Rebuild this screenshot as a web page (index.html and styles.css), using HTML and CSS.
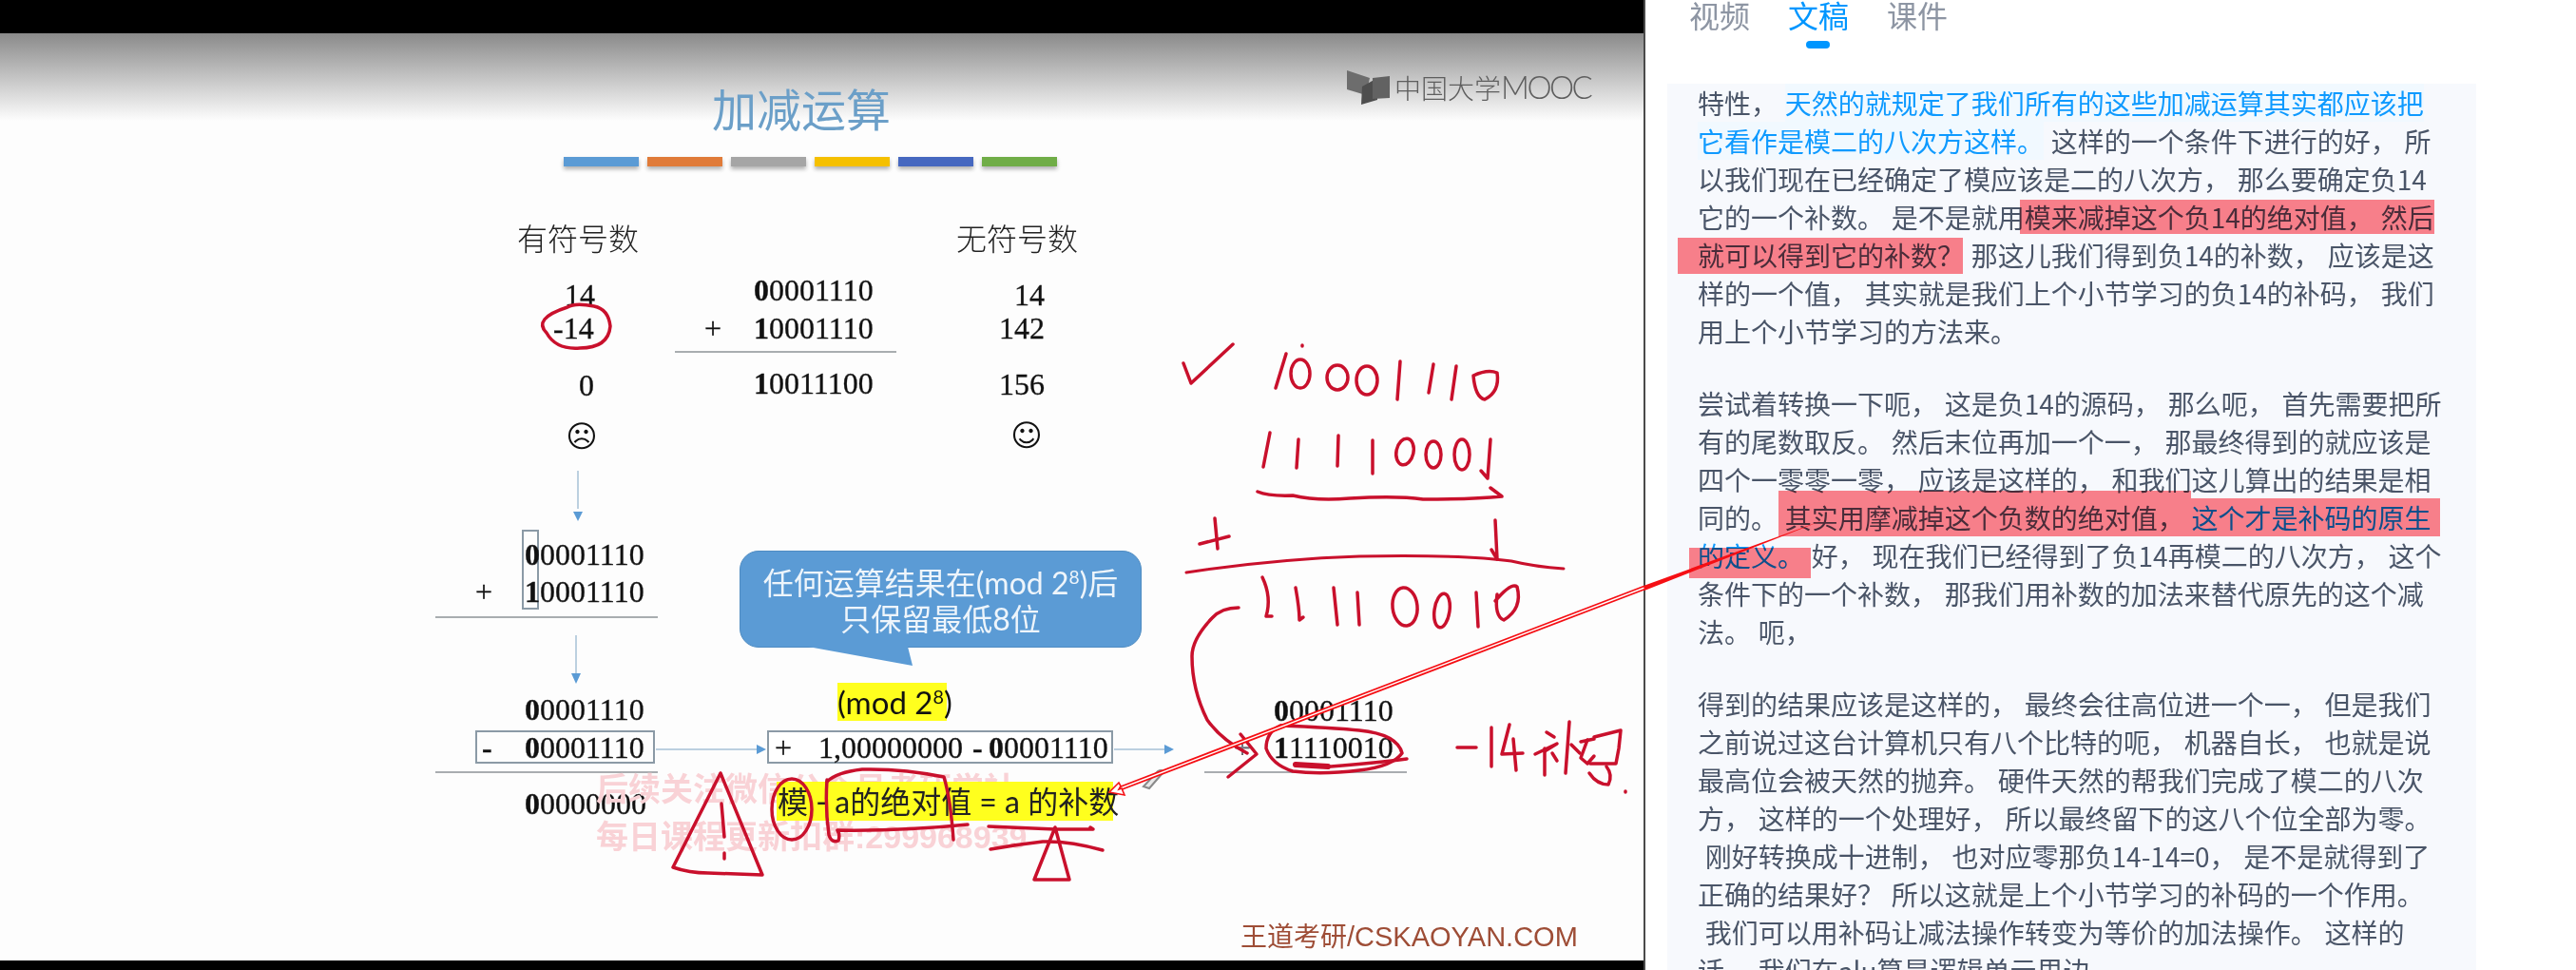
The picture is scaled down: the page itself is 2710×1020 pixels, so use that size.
FILE: index.html
```html
<!DOCTYPE html>
<html lang="zh">
<head>
<meta charset="utf-8">
<title>加减运算</title>
<link rel="stylesheet" href="styles.css">
</head>
<body>
<div class="page">
  <section class="video">
    <div class="slide">
      <h1 class="t title">加减运算</h1>
      <div class="bars"><i class="b1"></i><i class="b2"></i><i class="b3"></i><i class="b4"></i><i class="b5"></i><i class="b6"></i></div>
      <div class="t logo"><span class="logo-cn">中国大学</span>MOOC</div>

      <div class="t cn h-signed">有符号数</div>
      <div class="t cn h-unsigned">无符号数</div>

      <div class="t n a1">14</div>
      <div class="t n a2">-14</div>
      <div class="t n a3">0</div>
      <div class="t face f1">☹</div>
      <div class="t n u1">14</div>
      <div class="t n u2">142</div>
      <div class="t n u3">156</div>
      <div class="t face f2">☺</div>

      <div class="t n b-a1"><b>0</b>0001110</div>
      <div class="t n plus1">+</div>
      <div class="t n b-a2"><b>1</b>0001110</div>
      <div class="rule r-a"></div>
      <div class="t n b-a3"><b>1</b>0011100</div>

      <div class="box col"></div>
      <div class="t n c1"><b>0</b>0001110</div>
      <div class="t n plus2">+</div>
      <div class="t n c2"><b>1</b>0001110</div>
      <div class="rule r-b"></div>

      <div class="t n d1"><b>0</b>0001110</div>
      <div class="box d-box"></div>
      <div class="t n d-minus"><b>-</b></div>
      <div class="t n d2"><b>0</b>0001110</div>
      <div class="rule r-c"></div>
      <div class="t n d3"><b>0</b>0000000</div>

      <div class="t wm w1">后续关注微信公众号考研学社</div>
      <div class="t wm w2">每日课程更新扣群:299968939</div>

      <div class="callout">任何运算结果在(mod 2<sup>8</sup>)后<br>只保留最低8位</div>
      <div class="t mod">(mod 2<sup>8</sup>)</div>

      <div class="box e-box"></div>
      <div class="t n e-plus">+</div>
      <div class="t n e-one">1,00000000</div>
      <div class="t n e-minus"><b>-</b></div>
      <div class="t n e-num"><b>0</b>0001110</div>

      <div class="t formula">模 - a的绝对值 = a 的补数</div>

      <div class="t n g1"><b>0</b>0001110</div>
      <div class="t n plus3">+</div>
      <div class="t n g2"><b>1</b>1110010</div>
      <div class="rule r-d"></div>

      <div class="t brand"><span class="brand-cn">王道考研</span>/CSKAOYAN.COM</div>
    </div>
  </section>

  <aside class="side">
    <nav class="tabs">
      <span class="tab">视频</span>
      <span class="tab active">文稿</span>
      <span class="tab">课件</span>
    </nav>
    <div class="transcript">
      <p>特性， <span class="hl">天然的就规定了我们所有的这些加减运算其实都应该把<br>它看作是模二的八次方这样。</span> 这样的一个条件下进行的好， 所<br>以我们现在已经确定了模应该是二的八次方， 那么要确定负14<br>它的一个补数。 是不是就用模来减掉这个负14的绝对值， 然后<br>就可以得到它的补数？ 那这儿我们得到负14的补数， 应该是这<br>样的一个值， 其实就是我们上个小节学习的负14的补码， 我们<br>用上个小节学习的方法来。</p>
      <p>尝试着转换一下呃， 这是负14的源码， 那么呃， 首先需要把所<br>有的尾数取反。 然后末位再加一个一， 那最终得到的就应该是<br>四个一零零一零， 应该是这样的， 和我们这儿算出的结果是相<br>同的。 其实用摩减掉这个负数的绝对值， <span class="hl-plain">这个才是补码的原生<br>的定义。</span> 好， 现在我们已经得到了负14再模二的八次方， 这个<br>条件下的一个补数， 那我们用补数的加法来替代原先的这个减<br>法。 呃，</p>
      <p>得到的结果应该是这样的， 最终会往高位进一个一， 但是我们<br>之前说过这台计算机只有八个比特的呃， 机器自长， 也就是说<br>最高位会被天然的抛弃。 硬件天然的帮我们完成了模二的八次<br>方， 这样的一个处理好， 所以最终留下的这八个位全部为零。<br> 刚好转换成十进制， 也对应零那负14-14=0， 是不是就得到了<br>正确的结果好？ 所以这就是上个小节学习的补码的一个作用。<br> 我们可以用补码让减法操作转变为等价的加法操作。 这样的<br>话， 我们在alu算是逻辑单元里边，</p>
      <span class="mark m1"></span><span class="mark m2"></span><span class="mark m3"></span><span class="mark m4"></span><span class="mark m5"></span>
    </div>
  </aside>

  <svg class="ink" viewBox="0 0 2710 1020" aria-hidden="true">
    <!-- slide furniture -->
    <g class="logo-mark">
      <polygon class="lm1" points="1417,74 1441,82 1437,100 1417,94"/>
      <polygon class="lm2" points="1433,91 1449,82 1449,105 1432,110"/>
      <polygon class="lm3" points="1444,82 1462,80 1462,103 1444,104"/>
    </g>
    <g class="flow">
      <line x1="608" y1="495" x2="608" y2="535"/><polygon points="603,538 613,538 608,548"/>
      <line x1="606" y1="668" x2="606" y2="708"/><polygon points="601,708 611,708 606,719"/>
      <line x1="690" y1="788" x2="796" y2="788"/><polygon points="796,783 796,793 806,788"/>
      <line x1="1172" y1="788" x2="1225" y2="788"/><polygon points="1225,783 1225,793 1235,788"/>
    </g>
    <polygon class="tail" points="850,680 960,700 955,680"/>
    <g class="pencil"><path d="M1203,827 L1218,811 Q1223,808 1223,813 L1209,829 Z"/></g>

    <!-- pen strokes -->
    <g class="pen">
      <path d="M597,323 Q560,335 575,350 Q585,368 610,366 Q640,366 642,343 Q640,325 625,322 Q605,318 597,323"/>
      <path d="M1245,382 L1253,403 L1297,362"/>
      <path d="M1353,372 L1342,408"/><path class="dot" d="M1370,363 l0,1"/>
      <ellipse cx="1368" cy="393" rx="10" ry="15"/><ellipse cx="1407" cy="397" rx="11" ry="13"/><ellipse cx="1438" cy="400" rx="11" ry="15"/>
      <path d="M1473,380 L1470,420"/><path d="M1508,383 L1503,413"/><path d="M1532,385 L1527,420"/>
      <path d="M1550,395 Q1565,388 1575,392 Q1578,412 1562,420 Q1552,418 1550,395"/>

      <path d="M1336,455 L1329,491"/><path d="M1366,462 L1364,492"/><path d="M1408,458 L1407,490"/><path d="M1444,463 L1444,498"/>
      <ellipse cx="1478" cy="475" rx="9" ry="14" transform="rotate(12 1478 475)"/><ellipse cx="1508" cy="478" rx="8" ry="14"/><ellipse cx="1538" cy="478" rx="8" ry="16"/>
      <path d="M1568,462 L1565,503 L1558,495"/>

      <path d="M1323,517 Q1335,522 1360,521 Q1385,527 1420,524 Q1470,521 1497,525 Q1550,525 1580,522 L1568,513"/>

      <path d="M1262,572 L1293,564"/><path d="M1278,545 L1281,577"/>
      <path d="M1573,547 L1575,588 L1569,578"/>
      <path class="thin" d="M1248,602 Q1340,588 1430,585 Q1540,583 1590,590 Q1615,596 1645,598"/>

      <path d="M1328,607 Q1338,628 1332,648 L1338,648"/><path d="M1363,618 Q1367,640 1367,652 L1371,649"/>
      <path d="M1403,618 L1407,657"/><path d="M1428,623 L1430,657"/>
      <ellipse cx="1478" cy="638" rx="13" ry="20" transform="rotate(-6 1478 638)"/><ellipse cx="1517" cy="642" rx="8" ry="18" transform="rotate(8 1517 642)"/>
      <path d="M1553,623 L1555,659"/>
      <path d="M1573,632 Q1590,612 1596,617 Q1602,640 1582,652 Q1572,648 1575,625"/>

      <path d="M1303,639 Q1285,639 1275,650 Q1254,672 1254,690 Q1254,725 1270,757 Q1285,778 1312,792"/>
      <path d="M1305,772 L1322,793 L1292,817"/>
      <path d="M1347,763 Q1400,765 1430,768 Q1470,772 1475,792 Q1465,806 1430,810 Q1390,815 1360,811 Q1338,804 1332,787 Q1332,770 1347,763"/>
      <path class="thick" d="M1363,804 L1397,806"/>
      <path d="M1400,806 Q1450,802 1480,798"/>

      <path d="M1533,786 L1553,786"/><path d="M1569,765 L1569,806"/>
      <path d="M1588,762 L1580,793 L1602,792"/><path d="M1592,777 L1595,810"/>
      <path d="M1627,770 L1635,775"/><path d="M1615,793 L1638,782 L1625,790"/><path d="M1625,787 L1625,815"/><path d="M1633,792 L1638,800"/>
      <path d="M1651,759 L1647,813"/><path d="M1653,783 L1662,792"/>
      <path d="M1663,780 L1677,777"/><path d="M1670,778 L1663,797 L1670,803 L1677,795"/>
      <path d="M1677,775 L1705,768 L1703,787 L1700,803 L1673,803"/><path d="M1672,813 Q1680,825 1692,825 Q1697,815 1690,806"/>
      <path class="dot" d="M1710,832 l0,1"/>

      <path d="M758,813 L708,912 Q725,918 745,918 L802,920 L758,813"/>
      <path d="M759,845 L762,880"/><path d="M762,897 L762,903"/>
      <ellipse cx="833" cy="851" rx="21" ry="32"/>
      <path d="M870,822 Q880,812 907,809 Q950,808 993,817 Q1000,840 1003,883"/>
      <path d="M870,820 Q868,850 872,878 Q875,887 882,884 Q884,878 881,873 Q950,874 1018,867"/>
      <path d="M1040,869 Q1090,871 1110,872 L1150,872 L1147,870"/>
      <path d="M1042,893 Q1070,888 1097,885 Q1125,884 1160,894"/>
      <path d="M1110,870 L1088,925 L1125,925 L1110,870"/>
    </g>

    <!-- callout connector -->
    <path class="link-out" d="M1176,830 L1730,618"/>
    <path class="link-in" d="M1176,830 L1730,618"/>
    <polygon class="link-head" points="1167,833 1177,823 1179,826.5 1177,830 1180,829 1183,836"/>
    <polygon class="link-solid" points="1729,616 1918,547 1730,621"/>
  </svg>
</div>
</body>
</html>
```
FILE: styles.css
```css
* { box-sizing: border-box; }
html, body { margin: 0; padding: 0; background: #fff; }
.page { position: relative; display: flex; width: 2710px; height: 1020px; overflow: hidden; font-family: "Noto Sans CJK SC", "Liberation Sans", sans-serif; }

/* ---------- video ---------- */
.video { flex: 0 0 1731px; height: 1020px; padding: 35px 0 10px; background: #000; border-right: 2px solid #4a4a4a; }
.slide { position: relative; width: 100%; height: 975px; overflow: hidden; background: linear-gradient(#8a8a8a 0, #fdfdfd 92px) #fdfdfd; filter: blur(.5px); }

.t { position: absolute; margin: 0; line-height: 40px; white-space: nowrap; color: #111; }
.n { font-family: "Liberation Serif", serif; font-size: 32px; -webkit-text-stroke: .3px #111; }
.cn { font-size: 32px; font-weight: 300; color: #222; }
.face { font-family: "DejaVu Sans", sans-serif; font-size: 32px; width: 40px; text-align: center; }
sup { font-size: .6em; line-height: 0; vertical-align: .55em; }

.title { left: 749px; top: 58px; font-size: 47px; line-height: 40px; font-weight: 400; color: #6b9fc8; }
.bars { position: absolute; left: 593px; top: 130px; display: flex; gap: 9px; }
.bars i { display: block; width: 79px; height: 10px; box-shadow: 0 3px 4px rgba(0,0,0,.3); }
.b1 { background: #5b9bd5; } .b2 { background: #e07b39; } .b3 { background: #a5a5a5; }
.b4 { background: #f5c000; } .b5 { background: #4668c0; } .b6 { background: #70ad47; }
.logo { left: 1467px; top: 36px; font-family: "Lato", sans-serif; font-size: 33px; font-weight: 300; color: #5e5e5e; letter-spacing: -2.6px; }
.logo-cn { font-family: "Noto Sans CJK SC", sans-serif; font-size: 28px; letter-spacing: 0; }

.h-signed { left: 544px; top: 194px; }
.h-unsigned { left: 1006px; top: 194px; }
.a1 { left: 594px; top: 255px; } .a2 { left: 582px; top: 290px; } .a3 { left: 609px; top: 350px; }
.f1 { left: 592px; top: 404px; } .f2 { left: 1060px; top: 403px; }
.u1 { left: 1067px; top: 255px; } .u2 { left: 1051px; top: 290px; } .u3 { left: 1051px; top: 349px; }

.b-a1 { left: 793px; top: 250px; } .plus1 { left: 741px; top: 290px; } .b-a2 { left: 793px; top: 290px; } .b-a3 { left: 793px; top: 348px; }
.c1 { left: 552px; top: 528px; } .c2 { left: 552px; top: 567px; } .plus2 { left: 500px; top: 567px; }
.d1 { left: 552px; top: 691px; } .d2 { left: 552px; top: 731px; } .d3 { left: 552px; top: 790px; } .d-minus { left: 507px; top: 731px; }

.rule { position: absolute; height: 2px; background: #a9adb0; }
.r-a { left: 710px; top: 334px; width: 233px; }
.r-b { left: 458px; top: 613px; width: 234px; }
.r-c { left: 458px; top: 776px; width: 234px; }
.r-d { left: 1267px; top: 776px; width: 213px; }

.box { position: absolute; border: 2px solid #8b9aa6; }
.col { left: 549px; top: 522px; width: 18px; height: 84px; }
.d-box { left: 500px; top: 733px; width: 189px; height: 35px; }
.e-box { left: 807px; top: 733px; width: 364px; height: 35px; background: #fff; }
.e-plus { left: 815px; top: 731px; } .e-one { left: 861px; top: 731px; } .e-minus { left: 1023px; top: 731px; } .e-num { left: 1040px; top: 731px; }

.callout { position: absolute; left: 778px; top: 544px; width: 423px; height: 102px; padding: 14px 0 0; border: 1px solid #4f8cc2; border-radius: 20px; background: #5b9bd5; color: #eef5fb; font-family: "Lato", "Noto Sans CJK SC", sans-serif; font-size: 32px; line-height: 38px; text-align: center; white-space: nowrap; }
.mod { left: 881px; top: 683px; width: 115px; height: 40px; background: #ffff1e; font-family: "Lato", sans-serif; font-size: 33px; text-align: center; }
.formula { left: 817px; top: 787px; width: 354px; height: 41px; padding-left: 1px; background: #ffff1e; font-family: "Lato", "Noto Sans CJK SC", sans-serif; font-size: 32px; line-height: 41px; color: #222; }

.wm { font-family: "Liberation Sans", "Noto Sans CJK SC", sans-serif; font-weight: 700; font-size: 34px; color: #f9d2d6; }
.w1 { left: 627px; top: 775px; } .w2 { left: 627px; top: 825px; }

.g1 { left: 1340px; top: 692px; } .g2 { left: 1340px; top: 731px; } .plus3 { left: 1298px; top: 731px; color: #889; }
.brand { left: 1305px; top: 928px; font-family: "Liberation Sans", sans-serif; font-size: 29px; color: #9e4d36; }
.brand-cn { font-family: "Noto Sans CJK SC", sans-serif; font-size: 28px; }

/* ---------- side panel ---------- */
.side { flex: 1; min-width: 0; height: 1020px; overflow: hidden; background: #fff; }
.tabs { display: flex; gap: 40px; height: 88px; padding-left: 46px; }
.tab { position: relative; height: 30px; font-size: 32px; line-height: 30px; color: #8d95a3; }
.tab.active { color: #0096ff; }
.tab.active::after { content: ""; position: absolute; left: 19px; top: 43px; width: 25px; height: 8px; border-radius: 4px; background: #0096ff; }

.transcript { position: relative; width: 851px; height: 932px; margin-left: 23px; padding-left: 32px; overflow: hidden; background: #f7f9fd; font-size: 28px; line-height: 40px; color: #4a5568; word-spacing: 1.5px; }
.transcript p { margin: 0 0 36px; white-space: pre; }
.hl { color: #0e9aff; background: #f1f9ff; }
.hl-plain { color: #0e9aff; }
.mark { position: absolute; background: #ff828b; mix-blend-mode: multiply; }
.m1 { left: 371px; top: 122px; width: 436px; height: 36px; }
.m2 { left: 11px; top: 162px; width: 300px; height: 38px; }
.m3 { left: 117px; top: 428px; width: 434px; height: 48px; }
.m4 { left: 551px; top: 436px; width: 262px; height: 40px; }
.m5 { left: 23px; top: 488px; width: 128px; height: 32px; }

/* ---------- annotation layer ---------- */
.ink { position: absolute; left: 0; top: 0; width: 2710px; height: 1020px; pointer-events: none; }
.lm1 { fill: #6d6d6d; } .lm2 { fill: #4e4e4e; } .lm3 { fill: #626262; }
.flow line { stroke: #bcd0e0; stroke-width: 2; }
.flow polygon { fill: #5b9bd5; }
.tail { fill: #5b9bd5; }
.pencil path { fill: #e8e8e8; stroke: #8a8a8a; stroke-width: 2; }
.pen { fill: none; stroke: #c9102c; stroke-width: 3.5; stroke-linecap: round; stroke-linejoin: round; }
.pen .thin { stroke-width: 3; }
.pen .thick { stroke-width: 6; }
.link-out { fill: none; stroke: #f50f14; stroke-width: 5; }
.link-in { fill: none; stroke: #fff; stroke-width: 1.4; }
.link-head { fill: #fff; stroke: #f50f14; stroke-width: 1.6; }
.link-solid { fill: #f50f14; }
```
